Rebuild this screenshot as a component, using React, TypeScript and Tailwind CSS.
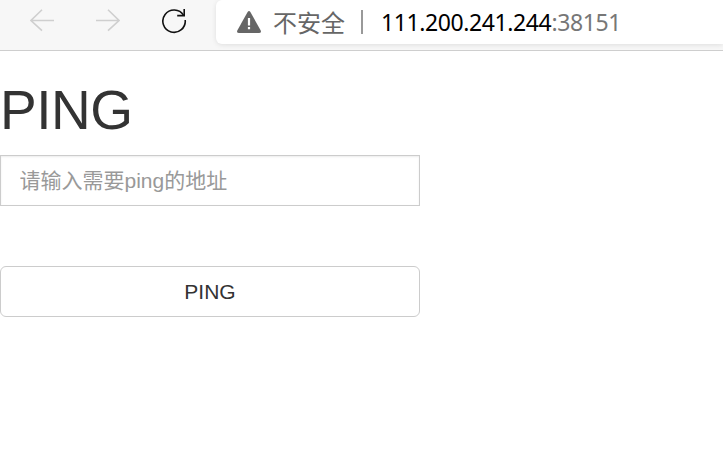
import React from "react";

function BackArrow() {
  return (
    <svg width="24" height="24" viewBox="0 0 24 24" fill="none" stroke="#cfcfcf" strokeWidth="1.6">
      <path d="M24 12.5H1M12 1.8L1 12.5L12 22.7" />
    </svg>
  );
}

function ForwardArrow() {
  return (
    <svg width="24" height="24" viewBox="0 0 24 24" fill="none" stroke="#cfcfcf" strokeWidth="1.6">
      <path d="M0 12.5H23M12 1.8L23 12.5L12 22.7" />
    </svg>
  );
}

function Reload() {
  return (
    <svg width="26" height="26" viewBox="0 0 26 26" fill="none" stroke="#111" strokeWidth="1.6">
      <path d="M23.2 12A11.2 11.2 0 1 1 21.6 7.3" />
      <path d="M22.2 1V7.6H15.2" />
    </svg>
  );
}

function Warning() {
  return (
    <svg width="24" height="23" viewBox="0 0 24 23">
      <path
        d="M10.6 1Q12 -0.8 13.4 1L23.7 19.6Q24.6 22 22 22H2Q-0.6 22 0.3 19.6Z"
        fill="#666"
      />
      <path d="M12 7V14.4M12 16V18.2" stroke="#fff" strokeWidth="2.2" />
    </svg>
  );
}

function Toolbar() {
  return (
    <header className="flex h-[51px] items-start overflow-hidden border-b border-[#cecece] bg-[#f7f7f7]">
      <nav className="flex w-[216px] shrink-0 gap-[42px] pl-[30px] pt-2">
        <BackArrow />
        <ForwardArrow />
        <Reload />
      </nav>
      <div className="flex h-11 grow items-center rounded-l-md bg-white pl-[21px] shadow-[0_1px_5px_rgba(0,0,0,0.1)]">
        <Warning />
        <span className="ml-3 whitespace-nowrap font-['Noto_Sans_CJK_SC',sans-serif] text-[24px] leading-6 text-[#666]">
          不安全
        </span>
        <span className="ml-4 h-6 w-0.5 shrink-0 bg-[#999]" />
        <span className="ml-[18px] whitespace-nowrap font-['Noto_Sans',sans-serif] text-[23px] leading-6 tracking-[-0.4px] text-black">
          111.200.241.244<span className="text-[#777]">:38151</span>
        </span>
      </div>
    </header>
  );
}

export default function App() {
  return (
    <div className="h-[472px] overflow-hidden bg-white font-['Liberation_Sans','Noto_Sans_CJK_SC',sans-serif] text-[#333]">
      <Toolbar />
      <main className="w-[420px] pt-[29px]">
        <h1 className="mb-[15px] text-[55px] leading-[60px] tracking-[-0.5px]">PING</h1>
        <input
          type="text"
          placeholder="请输入需要ping的地址"
          className="block h-[51px] w-full border border-[#ccc] px-[18.5px] text-[21px] shadow-[inset_0_1px_2px_rgba(0,0,0,0.075)] outline-none placeholder:text-[#999]"
        />
        <button className="mt-[60px] block h-[51px] w-full rounded-md border border-[#ccc] bg-white text-[21px]">
          PING
        </button>
      </main>
    </div>
  );
}
